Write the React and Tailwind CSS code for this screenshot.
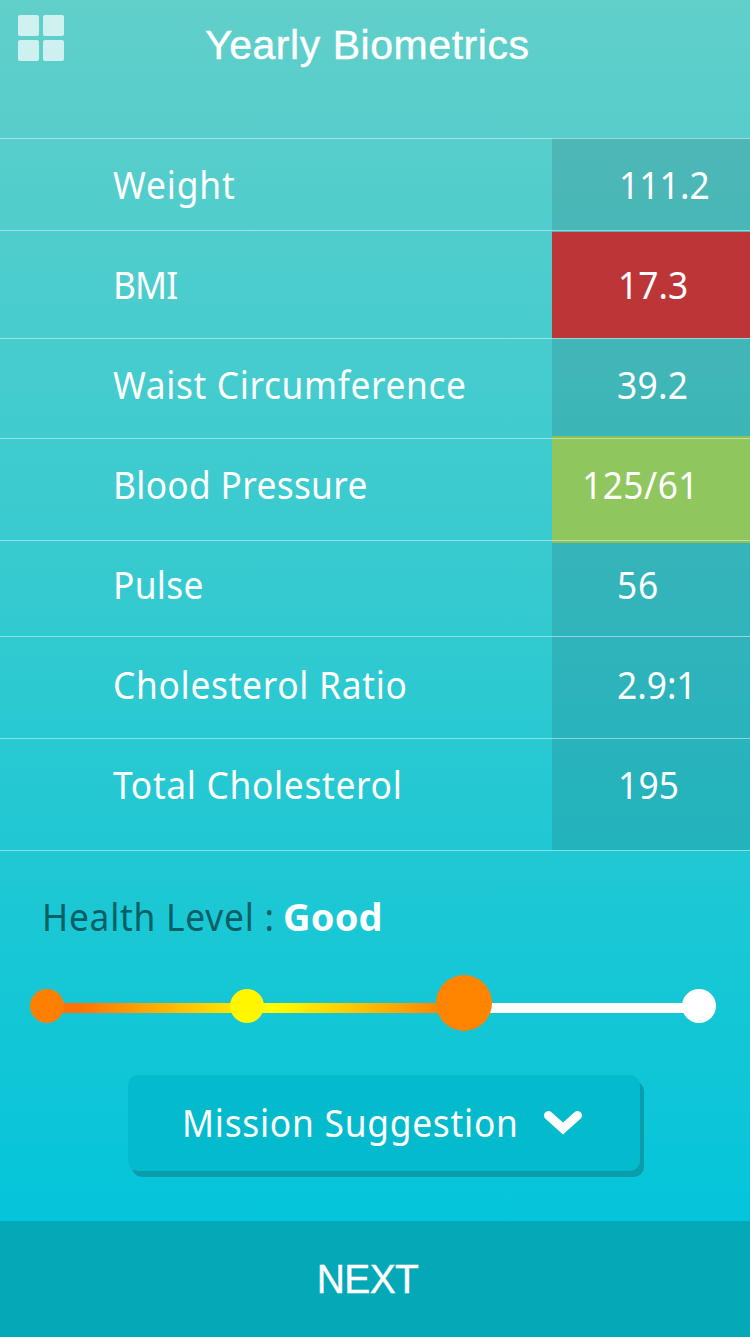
const rows = [
  { label: 'Weight', value: '111.2', row: 'h-[92px] pt-[26px]', text: 'tracking-[0.9px]', num: 'pl-[67px] tracking-[0.1px]' },
  { label: 'BMI', value: '17.3', row: 'h-[108px] pt-[34px]', text: 'tracking-[-1px]', num: 'pl-[66px] tracking-[0px]', fill: 'bg-[#bd3637] top-[2px] bottom-0' },
  { label: 'Waist Circumference', value: '39.2', row: 'h-[100px] pt-[26px]', text: 'tracking-[0.67px]', num: 'pl-[65px] tracking-[0.3px]' },
  { label: 'Blood Pressure', value: '125/61', row: 'h-[102px] pt-[26px]', text: 'tracking-[0.32px]', num: 'pl-[30px] tracking-[0.5px]', fill: 'bg-[#90c65e] border-y-2 border-[#8fbf55] top-[-2px] bottom-[-3px]' },
  { label: 'Pulse', value: '56', row: 'h-[96px] pt-[24px]', text: 'tracking-[0.3px]', num: 'pl-[65px] tracking-[0.8px]' },
  { label: 'Cholesterol Ratio', value: '2.9:1', row: 'h-[102px] pt-[28px]', text: 'tracking-[0.74px]', num: 'pl-[65px] tracking-[0px]' },
  { label: 'Total Cholesterol', value: '195', row: 'h-[112px] pt-[26px]', text: 'tracking-[0.72px]', num: 'pl-[66px] tracking-[0.2px]' },
]

const Header = () => {
  return (
    <header className="flex h-[138px] items-start">
      <div className="ml-[18px] mt-[15px] grid grid-cols-2 gap-1">
        <span className="size-[21px] rounded-[2px] bg-white/70" />
        <span className="size-[21px] rounded-[2px] bg-white/70" />
        <span className="size-[21px] rounded-[2px] bg-white/70" />
        <span className="size-[21px] rounded-[2px] bg-white/70" />
      </div>
      <h1 className="ml-[141px] mt-[21px] font-['Liberation_Sans',sans-serif] text-[41px] leading-[48px] tracking-[0.55px] whitespace-nowrap [-webkit-text-stroke:0.4px_white]">
        Yearly Biometrics
      </h1>
    </header>
  )
}

const Row = ({ item }) => {
  return (
    <div className={`relative flex ${item.row}`}>
      {/* value column background, some rows have a status colour on top */}
      <div className="absolute top-0 right-0 bottom-0 w-[198px] bg-[#2d5f66]/20" />
      {item.fill && <div className={`absolute right-0 z-10 w-[198px] ${item.fill}`} />}
      <div className="absolute inset-x-0 top-0 z-20 h-px bg-white/45" />
      <div className={`w-[552px] pl-[113px] leading-[40px] whitespace-nowrap ${item.text}`}>
        <span className="inline-block origin-left scale-x-93">{item.label}</span>
      </div>
      <div className={`relative z-20 leading-[40px] whitespace-nowrap ${item.num}`}>
        <span className="inline-block origin-left scale-x-93">{item.value}</span>
      </div>
    </div>
  )
}

const HealthLevel = () => {
  return (
    <section className="border-t border-white/45 pt-[45px]">
      <p className="flex pl-[42px] leading-[40px] whitespace-nowrap">
        <span className="w-[241px] origin-left scale-x-93 tracking-[0.8px] text-[#035f66]">Health Level :</span>
        <span className="font-bold tracking-[0.2px]">Good</span>
      </p>
      <div className="relative mt-[39px] ml-[30px] h-[56px] w-[686px]">
        <div className="absolute top-[28px] left-[17px] h-[10px] w-[417px] bg-linear-to-r from-[#ff7200] from-8% via-[#ffff00] via-54% to-[#ff7200]" />
        <div className="absolute top-[28px] left-[434px] h-[10px] w-[235px] bg-white" />
        <div className="absolute top-[14px] left-0 size-[34px] rounded-full bg-[#ff8000]" />
        <div className="absolute top-[14px] left-[200px] size-[34px] rounded-full bg-[#fff600]" />
        <div className="absolute top-0 left-[406px] size-[56px] rounded-full bg-[#ff8400]" />
        <div className="absolute top-[14px] left-[652px] size-[34px] rounded-full bg-white" />
      </div>
    </section>
  )
}

const App = () => {
  return (
    <main className="flex h-[1337px] w-[750px] flex-col overflow-hidden bg-[linear-gradient(to_bottom,#61cfca_0%,#34cad0_45%,#20c8d3_63.5%,#06c5da_90%,#00c4dc_100%)] font-['Noto_Sans',sans-serif] text-[38px] text-white">
      <Header />
      {rows.map((item) => (
        <Row key={item.label} item={item} />
      ))}
      <HealthLevel />
      <button className="mt-[44px] ml-[128px] flex h-[96px] w-[512px] shrink-0 items-start rounded-[10px] bg-[#04bbcd] pt-[27px] pl-[54px] shadow-[4px_6px_0_#0a9dab]">
        <span className="w-[362px] origin-left scale-x-93 text-left leading-[40px] tracking-[0.8px] whitespace-nowrap">Mission Suggestion</span>
        <svg className="mt-[8px]" width="38" height="26" viewBox="0 0 38 26" fill="none" stroke="#fff" strokeWidth="9" strokeLinecap="round">
          <path d="M4.5 5.5 L19 18.5 L33.5 5.5" />
        </svg>
      </button>
      <button className="mt-auto h-[116px] shrink-0 bg-[#04a8b7] pt-[1px] pr-[15px] font-['Liberation_Sans',sans-serif] text-[41px] tracking-[-0.6px] [-webkit-text-stroke:0.4px_white]">
        <span className="inline-block scale-x-95">NEXT</span>
      </button>
    </main>
  )
}

export default App
